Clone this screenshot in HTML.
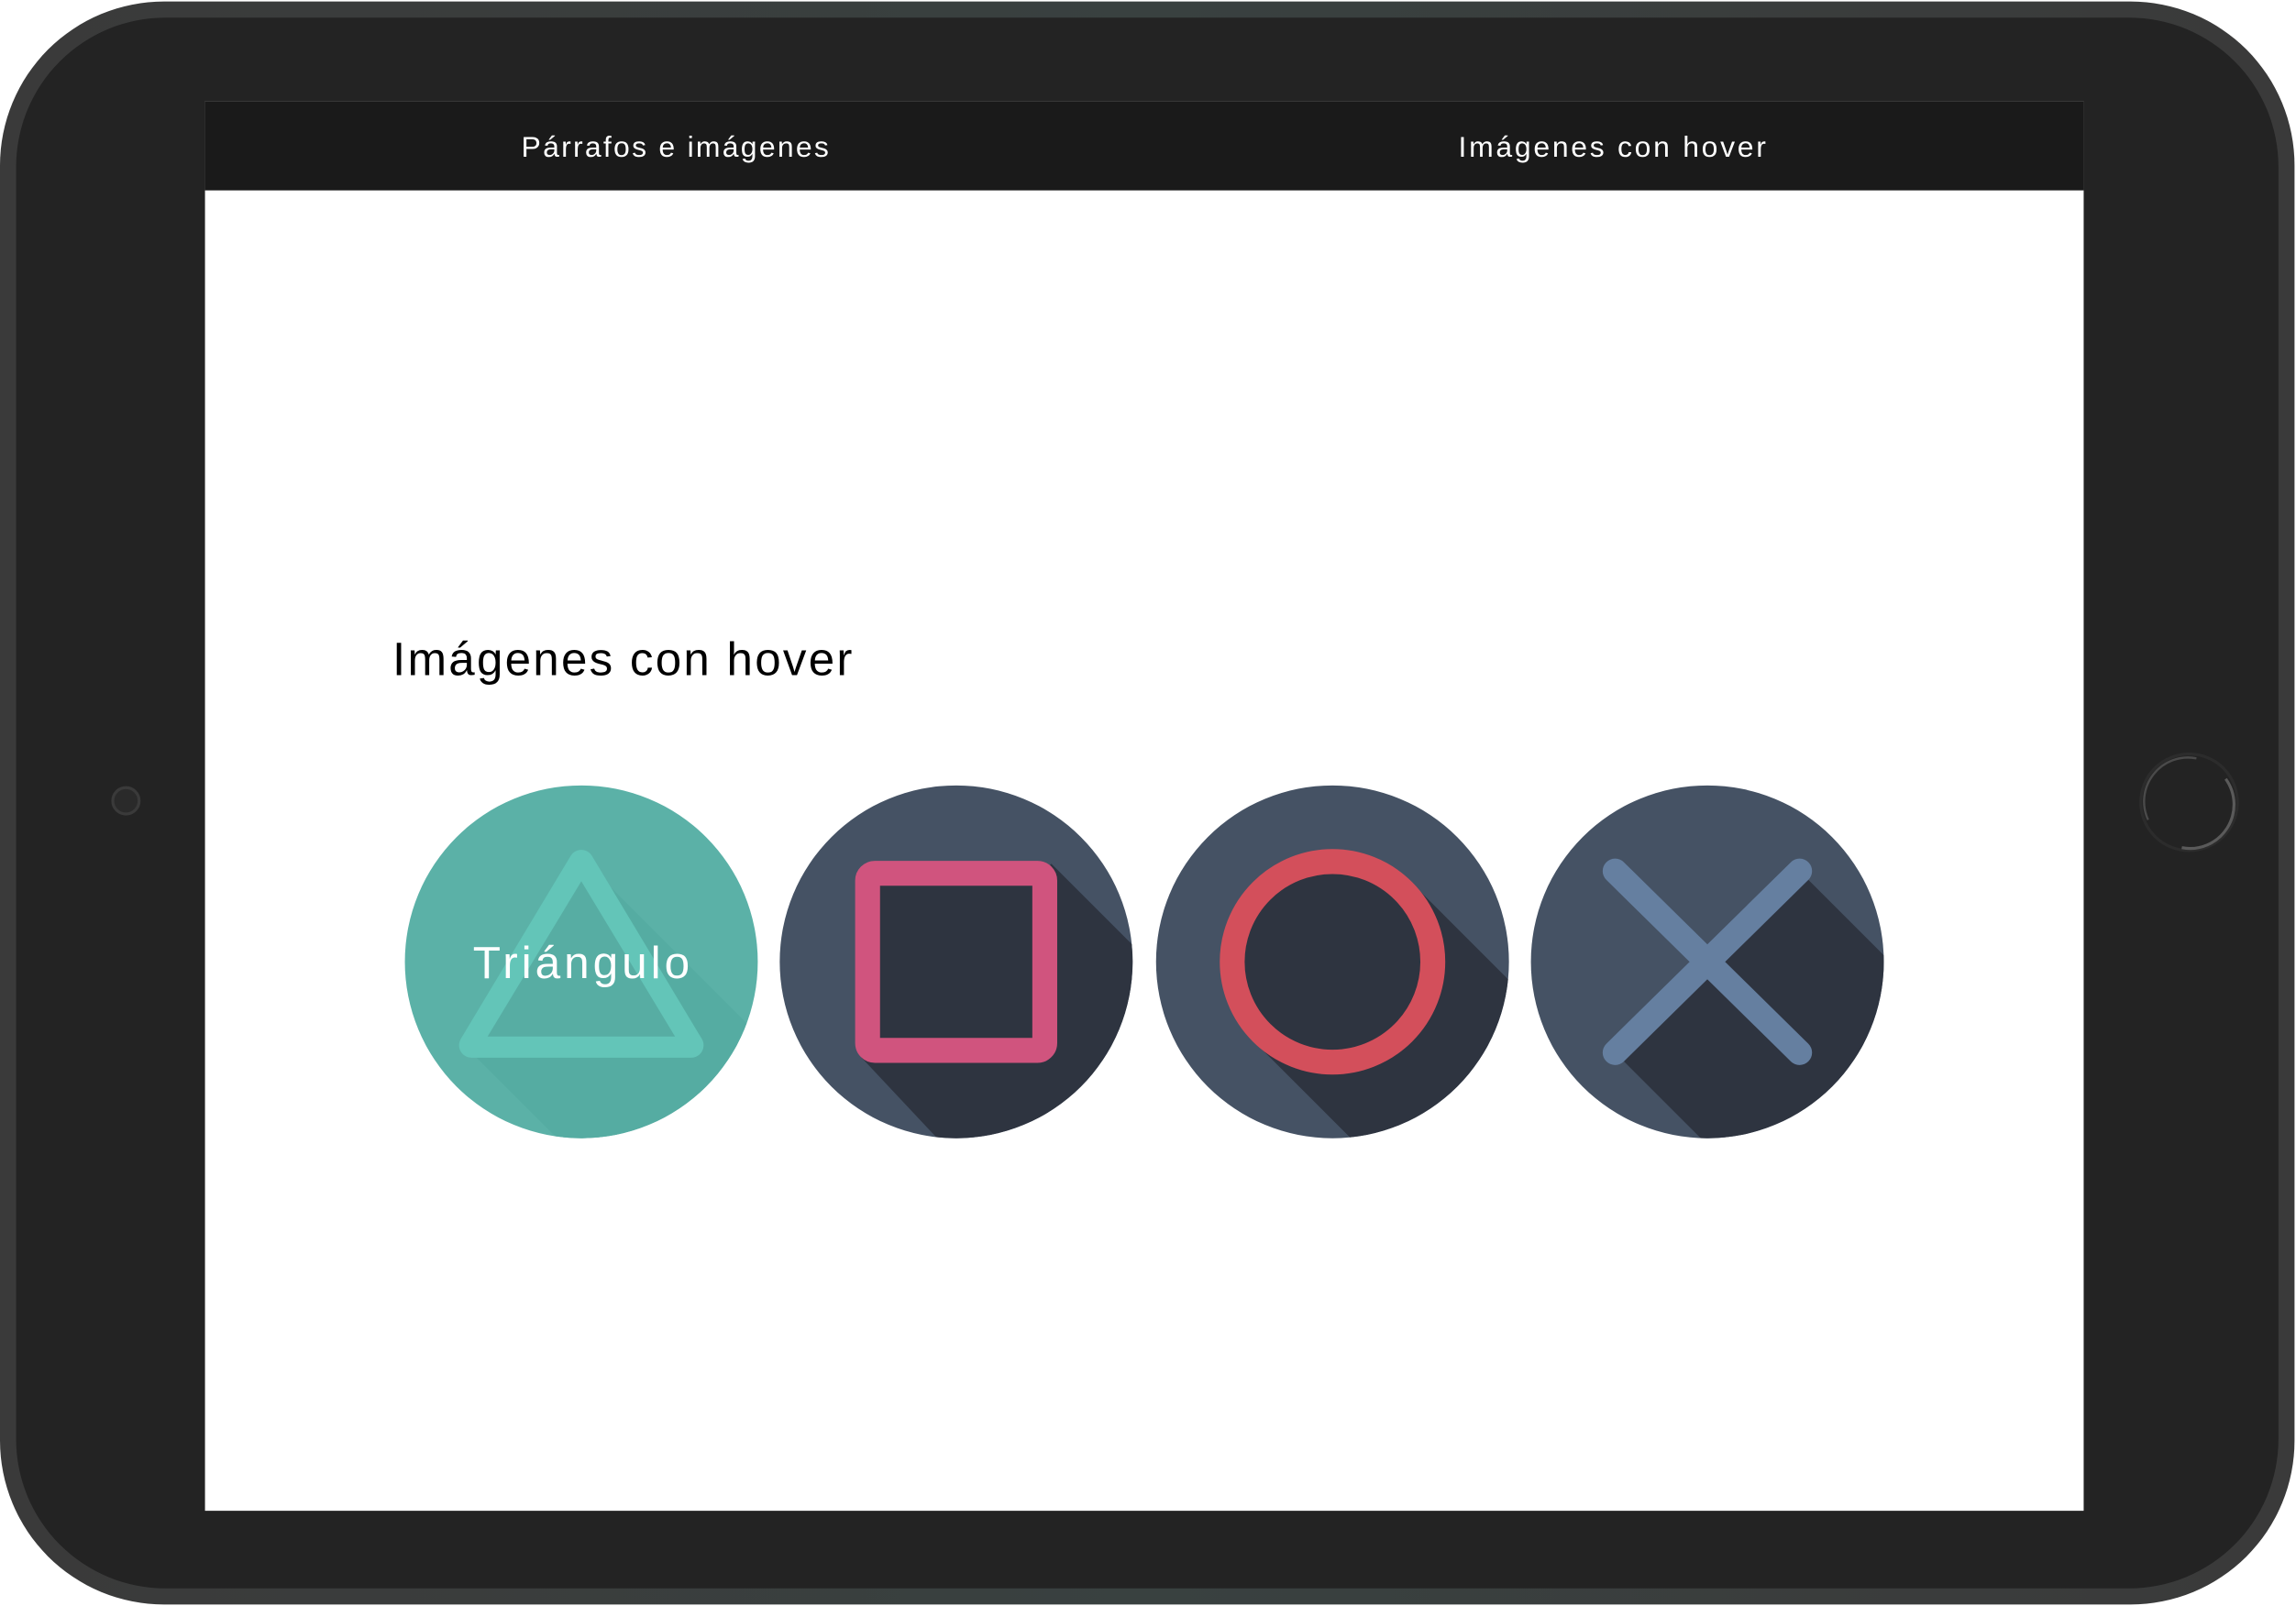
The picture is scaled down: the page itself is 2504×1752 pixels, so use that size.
<!DOCTYPE html>
<html><head><meta charset="utf-8"><style>
html,body{margin:0;padding:0;background:#fff;width:2504px;height:1752px;overflow:hidden}
svg{display:block}
text{font-family:"Liberation Sans",sans-serif}
</style></head><body>
<svg width="2504" height="1752" viewBox="0 0 1568 1097" xmlns="http://www.w3.org/2000/svg">
<defs>
<clipPath id="c1"><circle cx="397" cy="657" r="120.5"/></clipPath>
<clipPath id="c2"><circle cx="653" cy="657" r="120.5"/></clipPath>
<clipPath id="c3"><circle cx="910" cy="657" r="120.5"/></clipPath>
<clipPath id="c4"><circle cx="1166" cy="657" r="120.5"/></clipPath>
<linearGradient id="edge" x1="0" y1="0" x2="1" y2="0"><stop offset="0" stop-color="#3a3a3a"/><stop offset="0.5" stop-color="#394140"/><stop offset="1" stop-color="#3a3a3a"/></linearGradient>
</defs>
<rect x="0" y="1" width="1567" height="1095" rx="112" fill="url(#edge)"/>
<rect x="11" y="12" width="1545" height="1073" rx="102" fill="#232323"/>
<rect x="140" y="69" width="1283" height="963" fill="#ffffff"/>
<rect x="140" y="69" width="1283" height="61" fill="#1a1a1a"/>
<text x="461" y="107" fill="#fff" font-size="20" text-anchor="middle" textLength="210">Párrafos e imágenes</text>
<text x="1101" y="107" fill="#fff" font-size="20" text-anchor="middle" textLength="210">Imágenes con hover</text>
<text x="268" y="461" fill="#000" font-size="32" textLength="314">Imágenes con hover</text>
<!-- camera & home -->
<circle cx="86" cy="547" r="9" fill="#2a2a2a" stroke="#3a3a3a" stroke-width="2"/>
<circle cx="1495" cy="548" r="33" fill="none" stroke="#2c2c2c" stroke-width="2"/>
<path d="M1520 532 A30 30 0 0 1 1490 579" fill="none" stroke="#5a5a5a" stroke-width="2"/>
<path d="M1467 560 A30 30 0 0 1 1500 518" fill="none" stroke="#4a4a4a" stroke-width="1.5"/>
<!-- triangle -->
<g clip-path="url(#c1)">
<rect x="270" y="530" width="260" height="260" fill="#5bb1a7"/>
<polygon points="397,586 617,806 540,937 320,717" fill="#55aca2"/>
</g>
<path d="M397 589 L322 714 L472 714 Z" fill="none" stroke="#63c5b8" stroke-width="17" stroke-linejoin="round"/>
<path d="M397 602 L333 708 L461 708 Z" fill="#57ada3"/>
<text x="397" y="668" fill="#fff" font-size="31" text-anchor="middle" textLength="148">Triángulo</text>
<!-- square -->
<g clip-path="url(#c2)">
<rect x="526" y="530" width="260" height="260" fill="#455264"/>
<polygon points="718,590 938,810 800,948 588,722" fill="#2e3440"/>
</g>
<rect x="592.5" y="596.5" width="121" height="121" rx="5" fill="#2e3440" stroke="#d0547e" stroke-width="17"/>
<!-- circle -->
<g clip-path="url(#c3)">
<rect x="783" y="530" width="260" height="260" fill="#455264"/>
<polygon points="964,603 1184,823 1076,931 856,711" fill="#2e3440"/>
</g>
<circle cx="910" cy="657" r="68.5" fill="#2e3440" stroke="#d34f5b" stroke-width="17"/>
<!-- X -->
<g clip-path="url(#c4)">
<rect x="1039" y="530" width="260" height="260" fill="#455264"/>
<polygon points="1229,595 1449,815 1323,939 1103,719 1166,657" fill="#2e3440"/>
</g>
<path d="M1103 595 L1229 719 M1229 595 L1103 719" stroke="#657fa0" stroke-width="17" stroke-linecap="round"/>
</svg>
</body></html>
